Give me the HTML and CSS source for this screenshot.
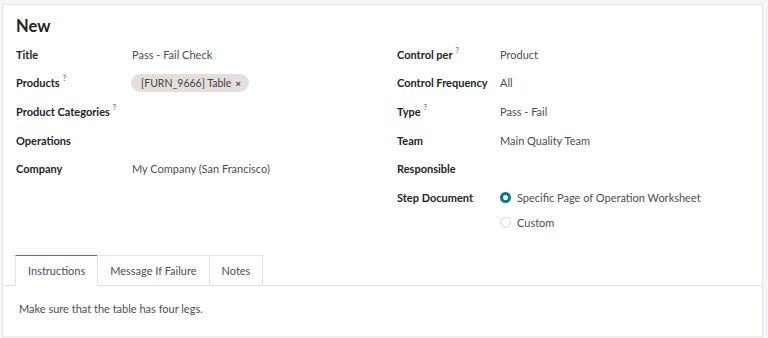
FILE: index.html
```html
<!DOCTYPE html>
<html>
<head>
<meta charset="utf-8">
<link rel="stylesheet" href="styles.css">
</head>
<body>
<div class="page">
  <div class="sheet">
    <h1 class="title">New</h1>
    <div class="groups">
      <div class="group group-left">
        <div class="row"><span class="label">Title</span><span class="value">Pass - Fail Check</span></div>
        <div class="row"><span class="label">Products<sup>?</sup></span><span class="value"><span class="chip">[FURN_9666] Table <span class="chip-x">×</span></span></span></div>
        <div class="row"><span class="label">Product Categories<sup>?</sup></span><span class="value"></span></div>
        <div class="row"><span class="label">Operations</span><span class="value"></span></div>
        <div class="row"><span class="label">Company</span><span class="value">My Company (San Francisco)</span></div>
      </div>
      <div class="group group-right">
        <div class="row"><span class="label">Control per<sup>?</sup></span><span class="value">Product</span></div>
        <div class="row"><span class="label">Control Frequency</span><span class="value">All</span></div>
        <div class="row"><span class="label">Type<sup>?</sup></span><span class="value">Pass - Fail</span></div>
        <div class="row"><span class="label">Team</span><span class="value">Main Quality Team</span></div>
        <div class="row"><span class="label">Responsible</span><span class="value"></span></div>
        <div class="row row-radio"><span class="label">Step Document</span>
          <div class="radios">
            <div class="radio"><span class="dot checked"></span>Specific Page of Operation Worksheet</div>
            <div class="radio"><span class="dot"></span>Custom</div>
          </div>
        </div>
      </div>
    </div>
    <div class="tabs">
      <div class="tab active">Instructions</div>
      <div class="tab">Message If Failure</div>
      <div class="tab">Notes</div>
    </div>
    <div class="tab-body">Make sure that the table has four legs.</div>
  </div>
</div>
</body>
</html>
```

FILE: styles.css
```css
* { box-sizing: border-box; }
html, body { margin: 0; padding: 0; }
body {
  background: #f5f6f8;
  font-family: "Lato", "Noto Sans", sans-serif;
  font-size: 11px;
  color: #212529;
  width: 768px;
  height: 338px;
  overflow: hidden;
}
.page {
  padding: 4px 5px 0 2px;
}
.sheet {
  background: #fff;
  border: 1px solid #e3e5e8;
  border-bottom: 2px solid #eceef0;
  height: 334px;
  padding-top: 9px;
}
.title {
  margin: 0 0 2px 13px;
  font-size: 16.5px;
  font-weight: 700;
  color: #1f2328;
  line-height: 24px;
}
.groups {
  display: grid;
  grid-template-columns: 381px 1fr;
  padding-left: 13px;
  height: 215px;
}
.row {
  display: flex;
  align-items: center;
  height: 28.6px;
}
.label {
  font-weight: 700;
  color: #212529;
  flex: none;
}
.group-left .label { width: 116px; }
.group-right .label { width: 103px; }
.label sup {
  font-size: 7.5px;
  color: #6c7a89;
  margin-left: 3px;
  vertical-align: 6px;
  line-height: 0;
}
.value { color: #4a4f55; }
.chip {
  display: inline-flex;
  align-items: center;
  background: #e6dedb;
  border-radius: 9px;
  height: 18px;
  padding: 0 8px 0 10px;
  margin-left: -1px;
  font-size: 10.5px;
  color: #3d4248;
}
.chip-x { font-size: 10px; margin-left: 4px; font-weight: 700; }
.row-radio { align-items: flex-start; padding-top: 8px; height: auto; }
.radios { display: flex; flex-direction: column; gap: 12px; }
.radio { display: flex; align-items: center; color: #4a4f55; }
.dot {
  width: 11px; height: 11px;
  border-radius: 50%;
  border: 1px solid #cfd3d7;
  margin-right: 6px;
  background: #fff;
}
.dot.checked { border: 3px solid #017e84; }
.tabs {
  display: flex;
  padding-left: 12px;
  border-bottom: 1px solid #dee2e6;
  height: 31px;
}
.tab {
  padding: 0 12px;
  line-height: 29px;
  color: #495057;
  border: 1px solid #e1e4e7;
  border-bottom: none;
  margin-right: -1px;
  background: #fff;
}
.tab.active {
  border-top: 1px solid #71639e;
  margin-bottom: -1px;
  height: 31px;
}
.tab-body {
  padding: 16px 16px;
  color: #4a4f55;
}
```
